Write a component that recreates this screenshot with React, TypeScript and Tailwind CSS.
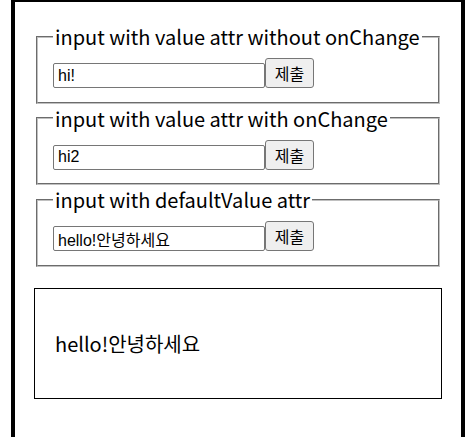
import React, { useState } from 'react'

const cjk = '[font-family:"Noto_Sans_CJK_KR","Noto_Sans",sans-serif]'

function Row({ value, onChange, readOnly }: { value?: string; onChange?: (v: string) => void; readOnly?: boolean }) {
  return (
    <div className="flex items-end">
      <input
        className="h-[25px] w-[212px] rounded-[2px] border border-[#767676] bg-white pl-[4px] pr-[2px] text-[16px] text-black outline-none [font-family:'Liberation_Sans','Noto_Sans_CJK_KR',sans-serif]"
        value={value}
        readOnly={readOnly}
        onChange={e => onChange?.(e.target.value)}
      />
      <button className="h-[30px] w-[49px] rounded-[3px] border border-[#767676] bg-[#efefef] text-[16px] leading-none text-black">
        제출
      </button>
    </div>
  )
}

export default function App() {
  const [second, setSecond] = useState('hi2')
  const [third, setThird] = useState('hello!안녕하세요')

  const fieldsetCls =
    'mx-[2px] border-2 border-[#c0c0c0] [border-style:groove] px-[15px] pt-[7px] pb-[13.5px] text-[20px]'

  return (
    <div className={`ml-[11px] w-[454px] min-h-[437px] border-x-4 border-t-2 border-black bg-white px-[19px] pt-[20px] text-black ${cjk}`}>
      <fieldset className={fieldsetCls}>
        <legend className="px-[2px] leading-[29px]">input with value attr without onChange</legend>
        <Row value="hi!" readOnly />
      </fieldset>
      <fieldset className={fieldsetCls}>
        <legend className="px-[2px] leading-[29px]">input with value attr with onChange</legend>
        <Row value={second} onChange={setSecond} />
      </fieldset>
      <fieldset className={fieldsetCls}>
        <legend className="px-[2px] leading-[29px]">input with defaultValue attr</legend>
        <Row value={third} onChange={setThird} />
      </fieldset>
      <div className="mt-[21px] border border-black px-[20px] py-[40px] text-[20px] leading-[29px]">
        {third}
      </div>
    </div>
  )
}
